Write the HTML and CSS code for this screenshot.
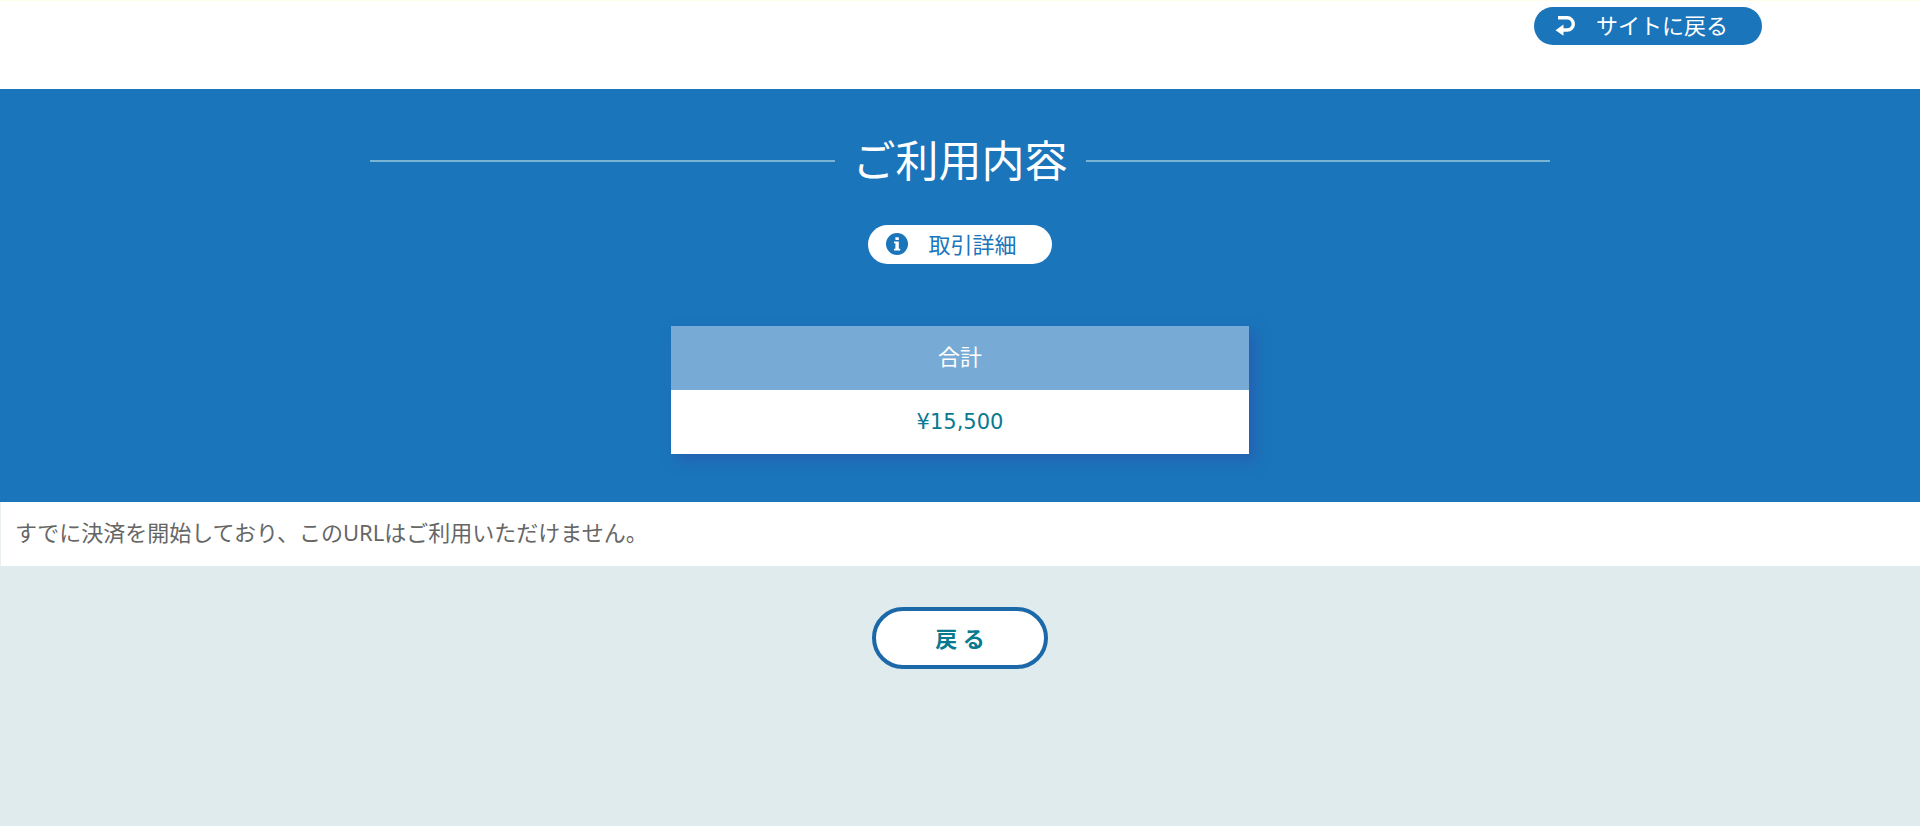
FILE: index.html
```
<!DOCTYPE html>
<html lang="ja">
<head>
  <meta charset="UTF-8">
  <meta name="viewport" content="width=device-width, initial-scale=1">
  <title>ご利用内容</title>
  <link rel="stylesheet" href="styles.css">
</head>
<body>
  <header class="header">
    <div class="header-inner">
      <a class="pill site-back" href="#">
        <svg class="icon" viewBox="0 0 22 22" aria-hidden="true">
          <path d="M4 3.8h9.2a5.8 5.8 0 0 1 0 12.2H8" fill="none" stroke="currentColor" stroke-width="3.4"/>
          <path d="M1.5 16.2l8-5.6v11.2z" fill="currentColor"/>
        </svg>
        <span>サイトに戻る</span>
      </a>
    </div>
  </header>

  <main>
    <section class="usage">
      <h1 class="usage-title">ご利用内容</h1>

      <button type="button" class="pill detail">
        <svg class="icon" viewBox="0 0 22 22" aria-hidden="true">
          <circle cx="11" cy="11" r="11" fill="currentColor"/>
          <path d="M9.4 4.2h3.4v2.8H9.4zM8 8.4h4.8v7.4h1.4v1.8H8v-1.8h1.4v-5.6H8z" fill="#fff"/>
        </svg>
        <span>取引詳細</span>
      </button>

      <table class="total">
        <thead>
          <tr><th scope="col">合計</th></tr>
        </thead>
        <tbody>
          <tr><td>¥15,500</td></tr>
        </tbody>
      </table>
    </section>

    <p class="message">すでに決済を開始しており、このURLはご利用いただけません。</p>

    <div class="actions">
      <button type="button" class="back">戻 る</button>
    </div>
  </main>
</body>
</html>
```

FILE: styles.css
```
* {
  box-sizing: border-box;
}

body {
  margin: 0;
  min-height: 100vh;
  font-family: "Noto Sans", "Noto Sans CJK JP", sans-serif;
  font-size: 22px;
  line-height: 32px;
  color: #666;
  background: #e0ebed;
}

.header {
  padding: 6px 0 44px;
  background: #fff;
  border-top: 1px solid #fffee8;
}

.header-inner {
  display: flex;
  justify-content: flex-end;
  max-width: 1604px;
  margin: 0 auto;
}

.pill {
  display: inline-flex;
  align-items: center;
  gap: 20px;
  border: none;
  border-radius: 20px;
  font: inherit;
  text-decoration: none;
  cursor: pointer;
}

.icon {
  width: 22px;
  height: 22px;
}

.site-back {
  padding: 2px 34px 4px 20px;
  color: #fff;
  background: #1b75bb;
}

.usage {
  display: flex;
  flex-direction: column;
  align-items: center;
  padding: 40px 20px 48px;
  background: #1b75bb;
}

.usage-title {
  display: flex;
  align-items: center;
  gap: 18px;
  width: 100%;
  max-width: 1180px;
  margin: 0 0 32px;
  font-size: 43px;
  font-weight: normal;
  line-height: 64px;
  color: #fff;
}

.usage-title::before,
.usage-title::after {
  content: "";
  flex: 1;
  height: 2px;
  background: #7ab4d3;
}

.detail {
  padding: 3px 35px 4px 18px;
  margin-bottom: 62px;
  color: #1b75bb;
  background: #fff;
}

.total {
  width: 100%;
  max-width: 578px;
  border-collapse: collapse;
  text-align: center;
  box-shadow: 6px 6px 12px rgba(45, 75, 170, 0.5);
}

.total th {
  padding: 14px 16px 18px;
  font-weight: normal;
  color: #fff;
  background: #77abd6;
}

.total td {
  padding: 16px;
  font-family: "DejaVu Sans", sans-serif;
  font-size: 21px;
  color: #087a90;
  background: #fff;
}

.message {
  margin: 0;
  padding: 14px 14px 18px;
  background: #fff;
  border-left: 1px solid #e9eef0;
}

.actions {
  display: flex;
  justify-content: center;
  padding: 41px 20px;
}

.back {
  min-width: 176px;
  height: 62px;
  border: 4px solid #1b69a8;
  border-radius: 31px;
  font: inherit;
  font-weight: bold;
  color: #087a90;
  background: #fff;
  cursor: pointer;
}
```
